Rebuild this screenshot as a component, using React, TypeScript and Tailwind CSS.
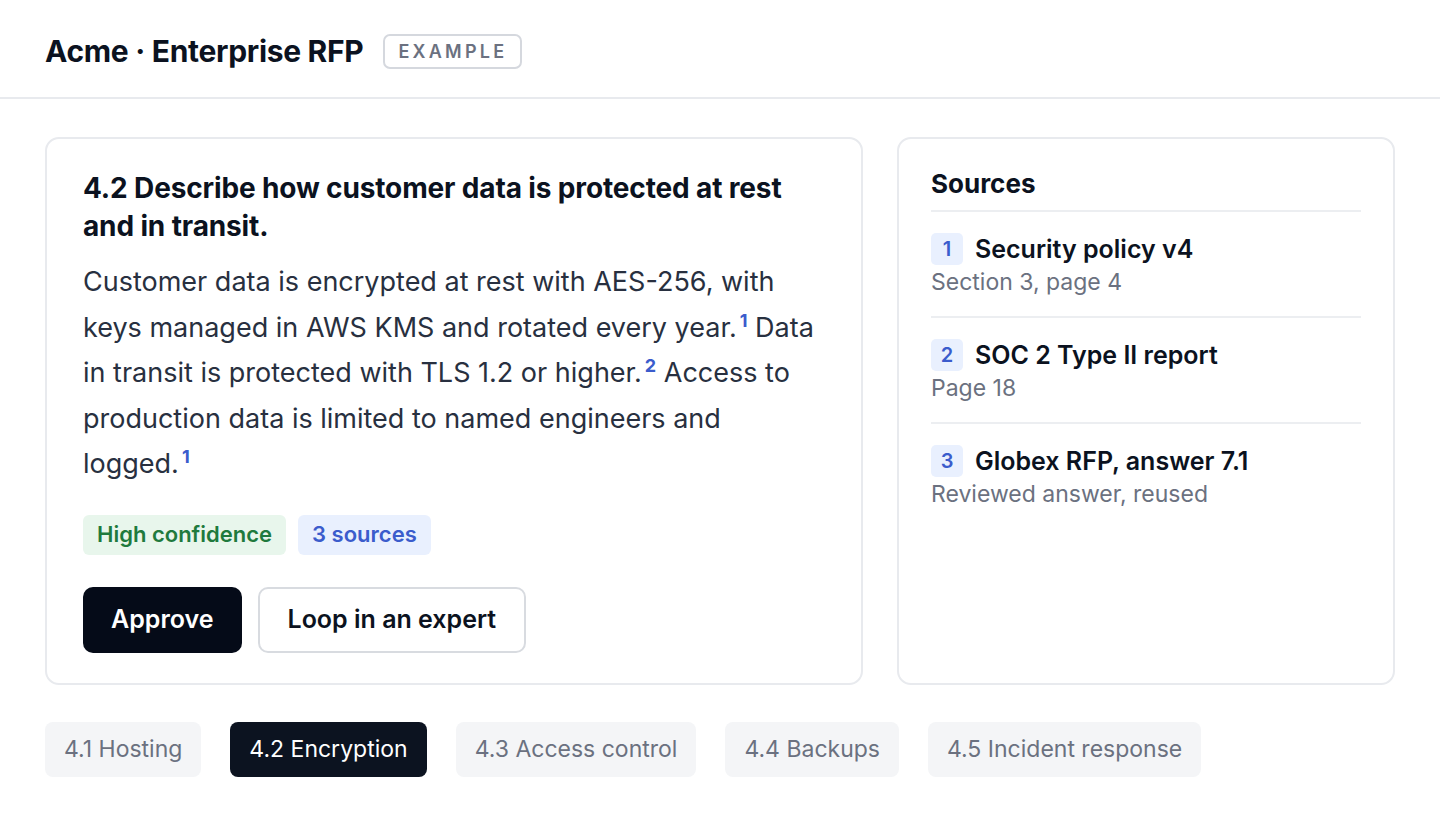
const sources = [
  { n: 1, title: 'Security policy v4', detail: 'Section 3, page 4' },
  { n: 2, title: 'SOC 2 Type II report', detail: 'Page 18' },
  { n: 3, title: 'Globex RFP, answer 7.1', detail: 'Reviewed answer, reused' },
];

const tabs = ['4.1 Hosting', '4.2 Encryption', '4.3 Access control', '4.4 Backups', '4.5 Incident response'];

function Ref({ n }: { n: number }) {
  return <sup className="ml-[3px] text-[18px] font-bold text-[#3b5ccc] relative -top-[10px]">{n}</sup>;
}

export default function App() {
  return (
    <div className="min-h-screen bg-white font-['Inter',sans-serif] text-[#0b1220]">
      {/* header */}
      <header className="h-[99px] border-b-2 border-[#e8eaee] px-[45px] pt-[6px] flex items-center gap-[20px]">
        <h1 className="text-[30px] font-bold tracking-[-0.01em]">Acme · Enterprise RFP</h1>
        <span className="h-[35px] px-[13px] flex items-center rounded-[7px] border-2 border-[#d5d8de] text-[18px] font-semibold tracking-[0.18em] text-[#6b7180]">
          EXAMPLE
        </span>
      </header>

      <main className="px-[45px] pt-[38px]">
        <div className="flex gap-[34px]">
          {/* answer card */}
          <section className="w-[818px] h-[548px] rounded-[14px] border-2 border-[#e8eaee] px-[36px] pt-[30px]">
            <h2 className="text-[28px] leading-[38px] font-bold tracking-[-0.005em]">
              4.2 Describe how customer data is protected at rest and in transit.
            </h2>
            <p className="mt-[14px] text-[27px] leading-[45.5px] text-[#283040]">
              Customer data is encrypted at rest with AES-256, with keys managed in AWS KMS and rotated every year.
              <Ref n={1} /> Data in transit is protected with TLS 1.2 or higher.
              <Ref n={2} /> Access to production data is limited to named engineers and logged.
              <Ref n={1} />
            </p>
            <div className="mt-[28px] flex gap-[12px]">
              <span className="h-[40px] px-[14px] flex items-center rounded-[6px] bg-[#e8f6ec] text-[22px] font-semibold text-[#1f7a3d]">
                High confidence
              </span>
              <span className="h-[40px] px-[14px] flex items-center rounded-[6px] bg-[#e9f0fe] text-[22px] font-semibold text-[#3b5ccc]">
                3 sources
              </span>
            </div>
            <div className="mt-[32px] flex gap-[16px]">
              <button className="h-[66px] px-[28px] rounded-[10px] bg-[#050b18] text-white text-[25px] font-semibold">
                Approve
              </button>
              <button className="h-[66px] px-[28px] rounded-[10px] border-2 border-[#d8dbe0] bg-white text-[25px] font-semibold text-[#0b1220]">
                Loop in an expert
              </button>
            </div>
          </section>

          {/* sources card */}
          <aside className="w-[498px] h-[548px] rounded-[14px] border-2 border-[#e8eaee] px-[32px] pt-[27px]">
            <h3 className="text-[26px] leading-[36px] font-bold pb-[8px] border-b-2 border-[#eceef1]">Sources</h3>
            <ul>
              {sources.map((s, i) => (
                <li
                  key={s.n}
                  className={`pt-[21px] pb-[19px] ${i < sources.length - 1 ? 'border-b-2 border-[#eceef1]' : ''}`}
                >
                  <div className="flex items-center gap-[12px]">
                    <span className="w-[32px] h-[32px] rounded-[5px] bg-[#e9f0fe] flex items-center justify-center text-[20px] font-semibold text-[#3b5ccc]">
                      {s.n}
                    </span>
                    <span className="text-[25px] font-semibold leading-[32px]">{s.title}</span>
                  </div>
                  <div className="mt-[2px] text-[23px] leading-[30px] text-[#6b7180]">{s.detail}</div>
                </li>
              ))}
            </ul>
          </aside>
        </div>

        {/* question tabs */}
        <nav className="mt-[37px] flex gap-[29px]">
          {tabs.map((t) => {
            const active = t === '4.2 Encryption';
            return (
              <button
                key={t}
                className={`h-[55px] px-[19px] rounded-[8px] text-[23px] ${
                  active ? 'bg-[#0c1320] text-white' : 'bg-[#f4f5f7] text-[#6b7180]'
                }`}
              >
                {t}
              </button>
            );
          })}
        </nav>
      </main>
    </div>
  );
}
